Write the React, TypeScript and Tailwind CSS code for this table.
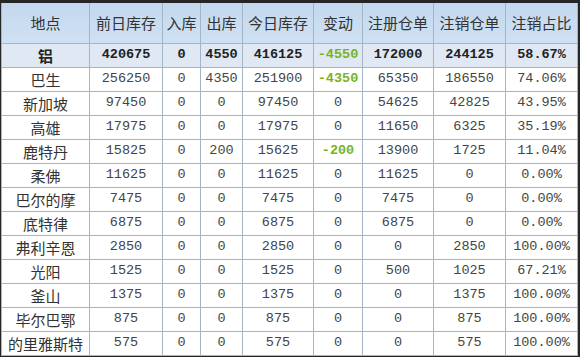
const headers = ['地点', '前日库存', '入库', '出库', '今日库存', '变动', '注册仓单', '注销仓单', '注销占比']
const widths = ['w-[88px]', 'w-[73px]', 'w-[38px]', 'w-[42px]', 'w-[71px]', 'w-[49px]', 'w-[71px]', 'w-[72px]', 'w-[72px]']

type Row = [string, string, string, string, string, string, string, string, string]

const total: Row = ['铝', '420675', '0', '4550', '416125', '-4550', '172000', '244125', '58.67%']

const rows: Row[] = [
  ['巴生', '256250', '0', '4350', '251900', '-4350', '65350', '186550', '74.06%'],
  ['新加坡', '97450', '0', '0', '97450', '0', '54625', '42825', '43.95%'],
  ['高雄', '17975', '0', '0', '17975', '0', '11650', '6325', '35.19%'],
  ['鹿特丹', '15825', '0', '200', '15625', '-200', '13900', '1725', '11.04%'],
  ['柔佛', '11625', '0', '0', '11625', '0', '11625', '0', '0.00%'],
  ['巴尔的摩', '7475', '0', '0', '7475', '0', '7475', '0', '0.00%'],
  ['底特律', '6875', '0', '0', '6875', '0', '6875', '0', '0.00%'],
  ['弗利辛恩', '2850', '0', '0', '2850', '0', '0', '2850', '100.00%'],
  ['光阳', '1525', '0', '0', '1525', '0', '500', '1025', '67.21%'],
  ['釜山', '1375', '0', '0', '1375', '0', '0', '1375', '100.00%'],
  ['毕尔巴鄂', '875', '0', '0', '875', '0', '0', '875', '100.00%'],
  ['的里雅斯特', '575', '0', '0', '575', '0', '0', '575', '100.00%'],
]

const cjk = "font-['Noto_Sans_CJK_SC',sans-serif]"
const mono = "font-['Liberation_Mono','Noto_Sans_CJK_SC',monospace]"

function Cell({ value, col, bold }: { value: string; col: number; bold?: boolean }) {
  const negative = col === 5 && value.startsWith('-')
  if (col === 0) {
    return (
      <td className={`h-[24px] border border-[#a3b5c7] p-0 text-center text-[15px] leading-none whitespace-nowrap ${cjk} ${bold ? 'font-bold text-[#222]' : 'text-[#333]'}`}>
        {value}
      </td>
    )
  }
  return (
    <td
      className={`h-[24px] border border-[#a3b5c7] p-0 text-center text-[13.5px] leading-none whitespace-nowrap ${mono} ${
        negative ? 'font-bold text-[#78b41c]' : bold ? 'font-bold text-[#222]' : 'text-[#444]'
      }`}
    >
      {value}
    </td>
  )
}

export default function App() {
  return (
    <div className="w-[580px] h-[357px] bg-[#262626] pt-[3px] pl-[1px] pr-[3px] pb-[2px]">
      <table className="table-fixed border-collapse w-[576px] bg-white">
        <colgroup>
          {widths.map((w, i) => (
            <col key={i} className={w} />
          ))}
        </colgroup>
        <thead>
          <tr className="bg-gradient-to-b from-[#c3d8ee] to-[#cfe1f3]">
            {headers.map((h) => (
              <th
                key={h}
                className={`h-[40px] border border-[#a3b5c7] border-t-0 p-0 text-center text-[15px] font-normal text-[#333] whitespace-nowrap ${cjk}`}
              >
                {h}
              </th>
            ))}
          </tr>
        </thead>
        <tbody>
          <tr className="bg-[#dfe8f3]">
            {total.map((v, i) => (
              <Cell key={i} value={v} col={i} bold />
            ))}
          </tr>
          {rows.map((r) => (
            <tr key={r[0]}>
              {r.map((v, i) => (
                <Cell key={i} value={v} col={i} />
              ))}
            </tr>
          ))}
        </tbody>
      </table>
    </div>
  )
}
